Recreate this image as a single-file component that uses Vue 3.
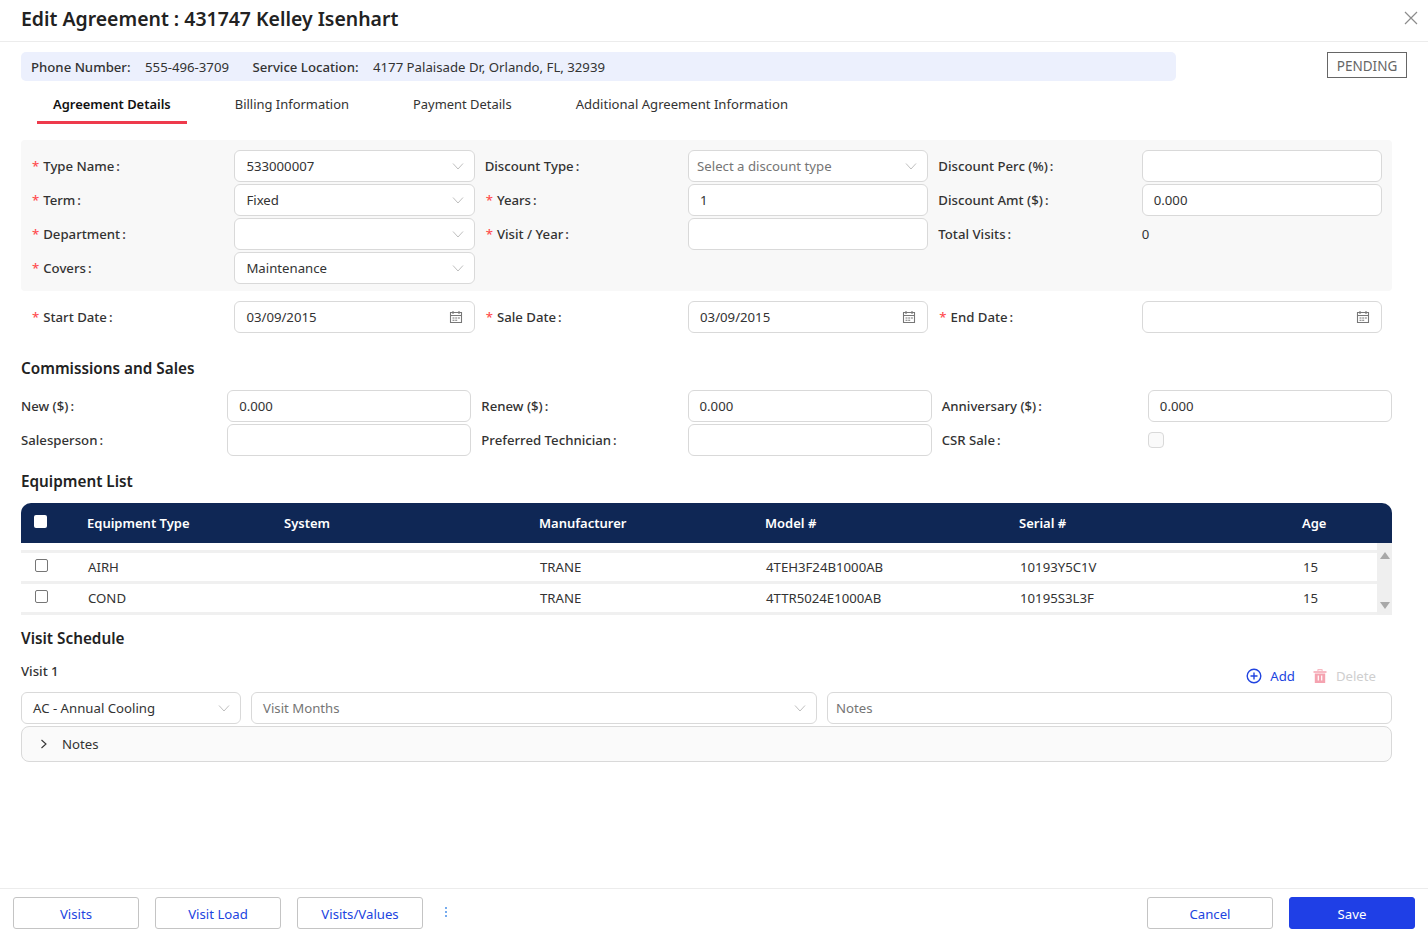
<script setup>
const mainFields = [
  { label: 'Type Name', req: true, kind: 'select', value: '533000007' },
  { label: 'Discount Type', kind: 'select', placeholder: 'Select a discount type' },
  { label: 'Discount Perc (%)', kind: 'input' },
  { label: 'Term', req: true, kind: 'select', value: 'Fixed' },
  { label: 'Years', req: true, kind: 'input', value: '1' },
  { label: 'Discount Amt ($)', kind: 'input', value: '0.000' },
  { label: 'Department', req: true, kind: 'select' },
  { label: 'Visit / Year', req: true, kind: 'input' },
  { label: 'Total Visits', kind: 'text', value: '0' },
  { label: 'Covers', req: true, kind: 'select', value: 'Maintenance' }
]

const dateFields = [
  { label: 'Start Date', req: true, kind: 'date', value: '03/09/2015' },
  { label: 'Sale Date', req: true, kind: 'date', value: '03/09/2015' },
  { label: 'End Date', req: true, kind: 'date' }
]

const salesFields = [
  { label: 'New ($)', kind: 'input', value: '0.000' },
  { label: 'Renew ($)', kind: 'input', value: '0.000' },
  { label: 'Anniversary ($)', kind: 'input', value: '0.000' },
  { label: 'Salesperson', kind: 'input' },
  { label: 'Preferred Technician', kind: 'input' },
  { label: 'CSR Sale', kind: 'check' }
]

const fieldGroups = { mainFields, dateFields }
const tabs = ['Agreement Details', 'Billing Information', 'Payment Details', 'Additional Agreement Information']
const columns = ['Equipment Type', 'System', 'Manufacturer', 'Model #', 'Serial #', 'Age']
const equipment = [
  ['AIRH', '', 'TRANE', '4TEH3F24B1000AB', '10193Y5C1V', '15'],
  ['COND', '', 'TRANE', '4TTR5024E1000AB', '10195S3L3F', '15']
]
</script>

<template>
  <div class="page">
    <header class="top">
      <h1>Edit Agreement : 431747 Kelley Isenhart</h1>
      <svg class="close" viewBox="0 0 14 14" width="14" height="14">
        <path d="M1 1l12 12M13 1L1 13" stroke="#8c8c8c" stroke-width="1.2" fill="none" />
      </svg>
    </header>

    <main class="body">
      <div class="info-row">
        <div class="info-bar">
          <b>Phone Number:</b><span class="info-val">555-496-3709</span>
          <b>Service Location:</b><span>4177 Palaisade Dr, Orlando, FL, 32939</span>
        </div>
        <div class="status">PENDING</div>
      </div>

      <nav class="tabs">
        <div v-for="(tab, i) in tabs" :key="tab" class="tab" :class="{ active: i === 0 }">{{ tab }}</div>
      </nav>

      <template v-for="(group, name) in fieldGroups" :key="name">
        <section class="field-grid" :class="name === 'mainFields' ? 'gray' : 'dates'">
          <div v-for="f in group" :key="f.label" class="field">
            <label class="label">
              <i v-if="f.req" class="req">*</i>{{ f.label }}<span class="colon">:</span>
            </label>
            <div v-if="f.kind === 'text'" class="plain">{{ f.value }}</div>
            <div v-else class="control">
              <span v-if="f.value" class="val">{{ f.value }}</span>
              <span v-else-if="f.placeholder" class="ph">{{ f.placeholder }}</span>
              <svg v-if="f.kind === 'select'" class="chev" viewBox="0 0 12 12" width="12" height="12">
                <path d="M1 3.5l5 5.5 5-5.5" stroke="#bfbfbf" stroke-width="1" fill="none" />
              </svg>
              <svg v-if="f.kind === 'date'" class="cal" viewBox="0 0 14 14" width="14" height="14">
                <path d="M1.5 2.5h11v10h-11zM1.5 5.5h11M4 1v3M10 1v3" stroke="#777" stroke-width="1.1" fill="none" />
                <path d="M3.5 7.5h2v1h-2zM6.2 7.5h2v1h-2zM8.9 7.5h2v1h-2zM3.5 9.7h2v1h-2zM6.2 9.7h2v1h-2z" fill="#777" />
              </svg>
            </div>
          </div>
        </section>
      </template>

      <h2 class="sales-title">Commissions and Sales</h2>
      <section class="field-grid sales">
        <div v-for="f in salesFields" :key="f.label" class="field">
          <label class="label">{{ f.label }}<span class="colon">:</span></label>
          <div v-if="f.kind === 'check'" class="plain"><span class="csr"></span></div>
          <div v-else class="control"><span v-if="f.value" class="val">{{ f.value }}</span></div>
        </div>
      </section>

      <h2 class="equip-title">Equipment List</h2>
      <div class="table-head">
        <div class="cell-check"><span class="head-box"></span></div>
        <div v-for="c in columns" :key="c" class="th">{{ c }}</div>
      </div>
      <div class="table-body">
        <div class="rows">
          <div v-for="row in equipment" :key="row[0]" class="tr">
            <div class="cell-check"><span class="row-box"></span></div>
            <div v-for="(v, i) in row" :key="i" class="td">{{ v }}</div>
          </div>
        </div>
        <div class="scroll">
          <span class="arrow up"></span>
          <span class="arrow down"></span>
        </div>
      </div>

      <h2 class="visit-title">Visit Schedule</h2>
      <div class="visit-head">
        <b class="visit-name">Visit 1</b>
        <div class="visit-actions">
          <span class="add">
            <svg viewBox="0 0 16 16" width="16" height="16">
              <circle cx="8" cy="8" r="6.8" stroke="#2144e0" stroke-width="1.4" fill="none" />
              <path d="M8 4.5v7M4.5 8h7" stroke="#2144e0" stroke-width="1.4" />
            </svg>
            Add
          </span>
          <span class="del">
            <svg viewBox="0 0 16 16" width="16" height="16">
              <path d="M5.5 3V1.2h5V3M1.5 3.2h13v1.6h-13zM2.8 5.6h10.4V15H2.8z" fill="#f5a3b0" />
              <path d="M6.3 7.5v5M9.7 7.5v5" stroke="#fff" stroke-width="1.2" />
              <path d="M6.3 2.8h3.4V2H6.3z" fill="#fff" />
            </svg>
            Delete
          </span>
        </div>
      </div>
      <div class="visit-row">
        <div class="control v1">
          <span class="val">AC - Annual Cooling</span>
          <svg class="chev" viewBox="0 0 12 12" width="12" height="12"><path d="M1 3.5l5 5.5 5-5.5" stroke="#bfbfbf" fill="none" /></svg>
        </div>
        <div class="control v2">
          <span class="ph">Visit Months</span>
          <svg class="chev" viewBox="0 0 12 12" width="12" height="12"><path d="M1 3.5l5 5.5 5-5.5" stroke="#bfbfbf" fill="none" /></svg>
        </div>
        <div class="control v3 slim"><span class="ph">Notes</span></div>
      </div>
      <div class="notes-panel">
        <svg viewBox="0 0 10 10" width="10" height="10"><path d="M2.5 1l4.5 4-4.5 4" stroke="#333" stroke-width="1.1" fill="none" /></svg>
        <span>Notes</span>
      </div>
    </main>

    <footer class="foot">
      <button class="btn">Visits</button>
      <button class="btn">Visit Load</button>
      <button class="btn">Visits/Values</button>
      <span class="dots"><i></i><i></i><i></i></span>
      <button class="btn cancel">Cancel</button>
      <button class="btn save">Save</button>
    </footer>
  </div>
</template>

<style scoped>
.page {
  height: 942px;
  display: flex;
  flex-direction: column;
  font-family: "Noto Sans", "Open Sans", sans-serif;
  font-size: 13.2px;
  color: #333;
  background: #fff;
  overflow: hidden;
}

.top {
  height: 42px;
  box-sizing: border-box;
  border-bottom: 1px solid #ececec;
  padding: 0 10px 0 21px;
  display: flex;
  align-items: center;
  justify-content: space-between;
  flex-shrink: 0;
}

.top h1 {
  margin: 0 0 4px;
  font-size: 19.45px;
  font-weight: 600;
  color: #222;
}

.close {
  margin-bottom: 6px;
}

.body {
  flex: 1;
  padding: 10px 36px 0 21px;
}

.info-row {
  display: flex;
  align-items: flex-start;
  justify-content: space-between;
  margin-right: -15px;
}

.info-bar {
  width: 1155px;
  height: 29px;
  box-sizing: border-box;
  padding: 0 10px;
  display: flex;
  align-items: center;
  background: #ecf0fd;
  border-radius: 5px;
}

.info-bar b {
  font-weight: 500;
  margin-right: 14.5px;
}

.info-val {
  margin-right: 23.5px;
}

.status {
  width: 80px;
  height: 26px;
  box-sizing: border-box;
  border: 1px solid #666;
  color: #666;
  display: flex;
  align-items: center;
  justify-content: center;
  font-size: 13.5px;
  padding-top: 1px;
}

.tabs {
  display: flex;
  gap: 32px;
  padding-left: 16px;
  margin-top: 9px;
}

.tab {
  height: 34px;
  padding: 5px 16px 0;
  box-sizing: border-box;
  color: #333;
  font-size: 12.95px;
}

.tab:last-child {
  font-size: 13.1px;
}

.tab.active {
  font-weight: 600;
  color: #111;
  border-bottom: 3px solid #ee3a4c;
}

.field-grid {
  display: grid;
  grid-template-columns: repeat(3, 1fr);
  column-gap: 10px;
  row-gap: 2px;
}

.field-grid.gray {
  margin-top: 16px;
  padding: 10px 10px 7px;
  background: #f8f8f8;
  border-radius: 4px;
}

.field-grid.dates {
  margin-top: 10px;
  padding: 0 10px;
}

.field {
  display: grid;
  grid-template-columns: 203.4px 1fr;
  align-items: center;
  height: 32px;
}

.sales .field {
  grid-template-columns: 206.2px 1fr;
}

.label {
  font-weight: 500;
  color: #333;
}

.req {
  color: #ff4d4f;
  font-style: normal;
  margin-right: 4px;
  margin-left: 1px;
}

.colon {
  margin-left: 2px;
}

.control {
  height: 32px;
  box-sizing: border-box;
  border: 1px solid #d9d9d9;
  border-radius: 6px;
  background: #fff;
  padding: 0 11px;
  display: flex;
  align-items: center;
  justify-content: space-between;
}

.ph {
  color: #757575;
  margin-left: -3px;
}

.chev,
.cal {
  margin-left: auto;
  flex-shrink: 0;
}

.chev {
  margin-right: -1px;
}

.plain {
  display: flex;
  align-items: center;
}

.csr {
  width: 16px;
  height: 16px;
  box-sizing: border-box;
  border: 1px solid #d9d9d9;
  border-radius: 4px;
  background: #fafafa;
}

h2 {
  margin: 0;
  font-size: 15.3px;
  line-height: 22px;
  font-weight: 600;
  color: #222;
}

.sales-title {
  margin-top: 24px;
  margin-bottom: 11px;
}

.equip-title {
  margin-top: 14px;
  margin-bottom: 11px;
}

.table-head,
.tr {
  display: grid;
  grid-template-columns: 66px 197px 255px 226px 254px 283px 1fr;
  align-items: center;
}

.table-head {
  height: 40px;
  background: #0f2755;
  border-radius: 10px 10px 0 0;
}

.th {
  color: #fff;
  font-weight: 600;
  font-size: 13px;
}

.table-head .cell-check {
  padding: 0 0 4px 13px;
}

.head-box {
  display: block;
  width: 13px;
  height: 13px;
  background: #fff;
  border-radius: 2px;
}

.table-body {
  display: flex;
  height: 72px;
}

.rows {
  flex: 1;
  padding-top: 7px;
}

.tr {
  box-sizing: border-box;
  height: 31px;
  border-top: 3px solid #f0f0f0;
}

.tr:last-child {
  height: 34px;
  border-bottom: 3px solid #f0f0f0;
}

.td {
  padding-left: 1px;
}

.tr .cell-check {
  padding-left: 14px;
}

.row-box {
  display: block;
  width: 13px;
  height: 13px;
  box-sizing: border-box;
  border: 1px solid #767676;
  border-radius: 2px;
  margin-bottom: 3px;
}

.scroll {
  width: 15px;
  background: #efefef;
  display: flex;
  flex-direction: column;
  justify-content: space-between;
  align-items: center;
  padding: 9px 0 6px;
  box-sizing: border-box;
}

.arrow {
  width: 0;
  height: 0;
  border-left: 5px solid transparent;
  border-right: 5px solid transparent;
}

.arrow.up {
  border-bottom: 7px solid #a8a8a8;
}

.arrow.down {
  border-top: 7px solid #a8a8a8;
}

.visit-title {
  margin-top: 12px;
}

.visit-head {
  display: flex;
  justify-content: space-between;
  margin-top: 13px;
  height: 30px;
}

.visit-name {
  font-weight: 500;
  line-height: 18px;
}

.visit-actions {
  display: flex;
  gap: 17px;
  padding: 4px 16px 0 0;
}

.add,
.del {
  display: flex;
  align-items: center;
  gap: 8px;
  height: 20px;
}

.add {
  color: #2144e0;
}

.del {
  color: #cfcfcf;
}

.visit-row {
  display: flex;
  gap: 10px;
}

.v1 {
  width: 220px;
}

.v2 {
  width: 566px;
}

.v3 {
  flex: 1;
}

.slim {
  padding-left: 8px;
}

.visit-row .ph {
  margin-left: 0;
}

.notes-panel {
  margin-top: 2px;
  height: 36px;
  box-sizing: border-box;
  border: 1px solid #d9d9d9;
  border-radius: 8px;
  background: #fafafa;
  display: flex;
  align-items: center;
  gap: 13px;
  padding-left: 17px;
}

.foot {
  height: 54px;
  flex-shrink: 0;
  box-sizing: border-box;
  border-top: 1px solid #ececec;
  padding: 8px 13px 0;
  display: flex;
  align-items: flex-start;
  gap: 16px;
}

.btn {
  width: 126px;
  height: 32px;
  border: 1px solid #c4c4c4;
  border-radius: 3px;
  background: #fff;
  color: #2144e0;
  font: inherit;
  padding: 2px 0 0;
}

.dots {
  display: flex;
  flex-direction: column;
  gap: 2px;
  margin: 10px 0 0 6px;
}

.dots i {
  width: 2px;
  height: 2px;
  background: #4a90e8;
  border-radius: 50%;
}

.cancel {
  margin-left: auto;
}

.save {
  background: #1f3fe6;
  border-color: #1f3fe6;
  color: #fff;
}
</style>
